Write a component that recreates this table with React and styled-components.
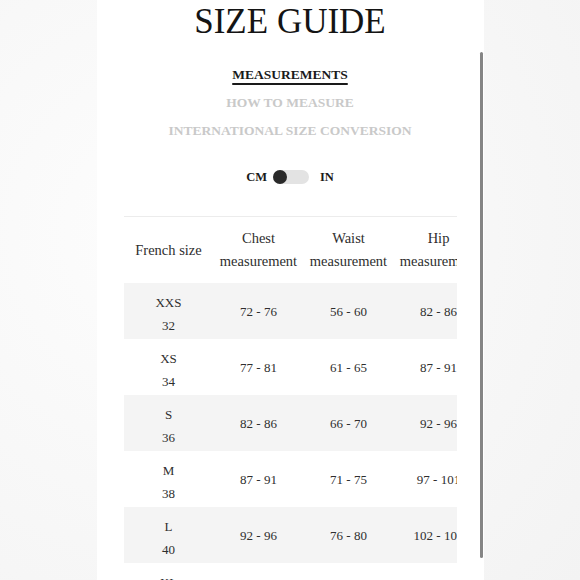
import styled, { createGlobalStyle } from 'styled-components'

const GlobalStyle = createGlobalStyle`
  html, body {
    margin: 0;
    padding: 0;
  }
  body {
    width: 580px;
    height: 580px;
    overflow: hidden;
    background: radial-gradient(circle at 30% 40%, #fdfdfd 0%, #f7f7f7 60%, #f3f3f3 100%);
    font-family: "Liberation Serif", "Times New Roman", serif;
  }
`

const Page = styled.div`
  display: flex;
  justify-content: center;
  height: 580px;
`

const Panel = styled.div`
  position: relative;
  width: 387px;
  height: 580px;
  padding: 0 27px;
  box-sizing: border-box;
  background: #fff;
  overflow: hidden;
`

const Title = styled.h1`
  margin: 0;
  font-size: 35px;
  line-height: 43px;
  font-weight: 400;
  text-align: center;
  color: #141414;
`

const Tabs = styled.nav`
  display: flex;
  flex-direction: column;
  align-items: center;
  margin-top: 18px;
`

const Tab = styled.span`
  font-size: 13.5px;
  line-height: 28px;
  font-weight: 700;
  color: ${(p) => (p.$active ? '#1a1a1a' : '#c9c9c9')};
  text-decoration: ${(p) => (p.$active ? 'underline' : 'none')};
  text-decoration-thickness: 2px;
  text-underline-offset: 4px;
`

const UnitRow = styled.div`
  display: flex;
  justify-content: center;
  align-items: center;
  margin-top: 25px;
  height: 14px;
  font-size: 12.5px;
  font-weight: 700;
  color: #1a1a1a;
`

const Switch = styled.div`
  position: relative;
  width: 36px;
  height: 14px;
  margin: 0 11px 0 6px;
  border-radius: 7px;
  background: #e3e3e3;
`

const Knob = styled.div`
  position: absolute;
  top: 0;
  left: ${(p) => (p.$on ? '22px' : '0')};
  width: 14px;
  height: 14px;
  border-radius: 50%;
  background: #2a2a2a;
`

const TableWrap = styled.div`
  margin-top: 32px;
  border-top: 1px solid #ececec;
  overflow: hidden;
`

const Table = styled.table`
  border-collapse: collapse;
  table-layout: fixed;
  width: 360px;
  color: #2e2e2e;
`

const HeadCell = styled.th`
  width: 90px;
  height: 66px;
  padding: 0;
  font-size: 14.5px;
  font-weight: 400;
  line-height: 23px;
  text-align: center;
  vertical-align: middle;
  white-space: nowrap;
`

const Row = styled.tr`
  background: ${(p) => (p.$shade ? '#f4f4f4' : '#fff')};
`

const Cell = styled.td`
  height: 56px;
  padding: 0;
  font-size: 13px;
  line-height: 23px;
  text-align: center;
  vertical-align: middle;
  white-space: nowrap;
`

const SizeCell = styled(Cell)`
  height: 50px;
  padding-top: 6px;
`

const Scrollbar = styled.div`
  position: absolute;
  right: 1px;
  top: 52px;
  width: 3px;
  height: 506px;
  border-radius: 2px;
  background: #858585;
`

const sizes = [
  { label: 'XXS', fr: '32', chest: '72 - 76', waist: '56 - 60', hip: '82 - 86' },
  { label: 'XS', fr: '34', chest: '77 - 81', waist: '61 - 65', hip: '87 - 91' },
  { label: 'S', fr: '36', chest: '82 - 86', waist: '66 - 70', hip: '92 - 96' },
  { label: 'M', fr: '38', chest: '87 - 91', waist: '71 - 75', hip: '97 - 101' },
  { label: 'L', fr: '40', chest: '92 - 96', waist: '76 - 80', hip: '102 - 106' },
  { label: 'XL', fr: '42', chest: '97 - 101', waist: '81 - 85', hip: '107 - 111' },
  { label: 'XXL', fr: '44', chest: '102 - 106', waist: '86 - 90', hip: '112 - 116' },
]

export default function App() {
  return (
    <>
      <GlobalStyle />
      <Page>
        <Panel>
          <Title>SIZE GUIDE</Title>
          <Tabs>
            <Tab $active>MEASUREMENTS</Tab>
            <Tab>HOW TO MEASURE</Tab>
            <Tab>INTERNATIONAL SIZE CONVERSION</Tab>
          </Tabs>
          <UnitRow>
            <span>CM</span>
            <Switch>
              <Knob />
            </Switch>
            <span>IN</span>
          </UnitRow>
          <TableWrap>
            <Table>
              <thead>
                <tr>
                  <HeadCell>French size</HeadCell>
                  <HeadCell>Chest<br />measurement</HeadCell>
                  <HeadCell>Waist<br />measurement</HeadCell>
                  <HeadCell>Hip<br />measurement</HeadCell>
                </tr>
              </thead>
              <tbody>
                {sizes.map((s, i) => (
                  <Row key={s.label} $shade={i % 2 === 0}>
                    <SizeCell>{s.label}<br />{s.fr}</SizeCell>
                    <Cell>{s.chest}</Cell>
                    <Cell>{s.waist}</Cell>
                    <Cell>{s.hip}</Cell>
                  </Row>
                ))}
              </tbody>
            </Table>
          </TableWrap>
          <Scrollbar />
        </Panel>
      </Page>
    </>
  )
}
